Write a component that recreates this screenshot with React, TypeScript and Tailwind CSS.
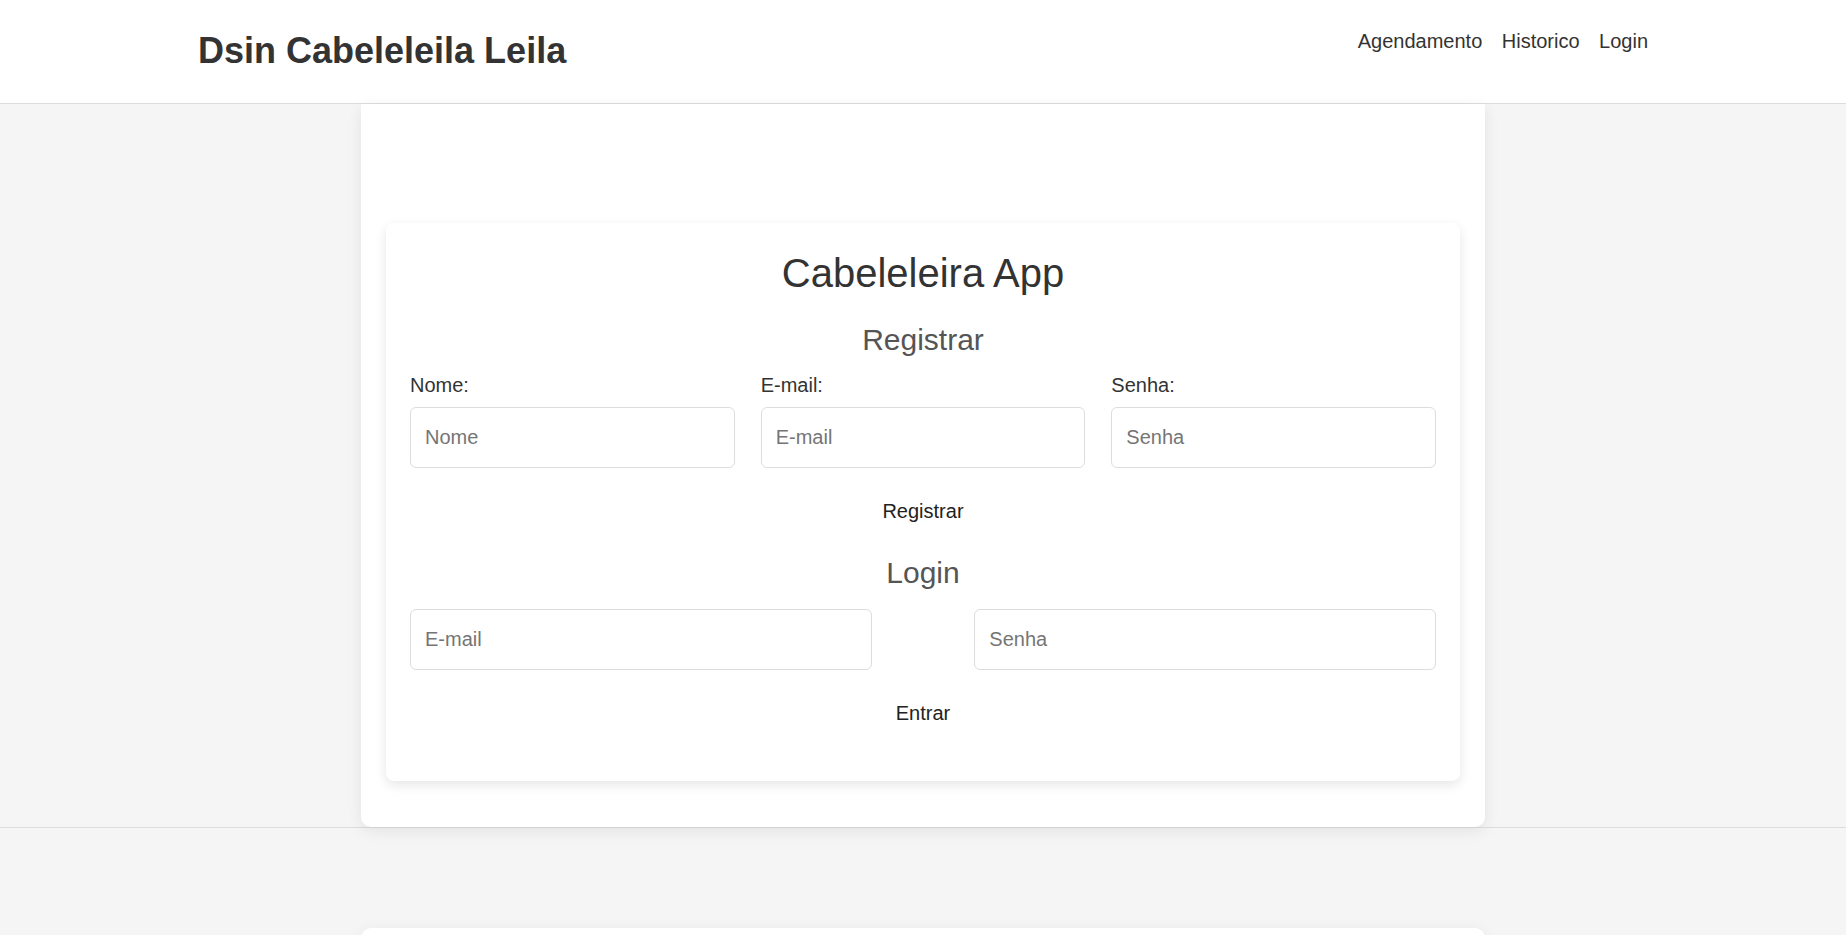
import { useState } from 'react';

const inputClass =
  "block w-full h-[61px] px-[14px] bg-white border border-[#dddddd] rounded-[6px] text-[20px] text-[#333] placeholder:text-[#757575] outline-none";

function Field({ label, placeholder, type = 'text' }: { label: string; placeholder: string; type?: string }) {
  return (
    <div className="flex flex-col">
      <label className="text-[20px] leading-[23px] text-[#333]">{label}</label>
      <input type={type} placeholder={placeholder} className={`${inputClass} mt-[10px]`} />
    </div>
  );
}

export default function App() {
  const [nome, setNome] = useState('');

  return (
    <div className="min-h-screen bg-[#f4f5f4] font-['Liberation_Sans',Arial,sans-serif] text-[#333]">
      <header className="bg-white border-b border-[#dddddd]">
        <div className="w-[1450px] mx-auto h-[103px] pt-[30px] flex items-start justify-between">
          <a href="#" className="text-[36px] leading-[41px] font-bold text-[#333]">
            Dsin Cabeleleila Leila
          </a>
          <nav className="flex gap-[19.5px] text-[20px] leading-[23px] text-[#333]">
            <a href="#">Agendamento</a>
            <a href="#">Historico</a>
            <a href="#">Login</a>
          </nav>
        </div>
      </header>

      <main>
        {/* Login / registro */}
        <section className="border-b border-[#dddddd]">
          <div className="w-[1124px] mx-auto bg-white rounded-b-[10px] shadow-[0_4px_16px_rgba(0,0,0,0.08)] px-[25px] pt-[119px] pb-[46px]">
            <div className="bg-white rounded-[8px] shadow-[0_4px_12px_rgba(0,0,0,0.1)] px-[24px] pt-[27px] pb-[56px]">
              <h1 className="text-center text-[40px] leading-[46px] text-[#333]">Cabeleleira App</h1>

              <h2 className="mt-[27px] text-center text-[30px] leading-[34px] text-[#555]">Registrar</h2>
              <form className="mt-[17px]" onSubmit={(e) => e.preventDefault()}>
                <div className="grid grid-cols-3 gap-x-[26px]">
                  <div className="flex flex-col">
                    <label className="text-[20px] leading-[23px] text-[#333]">Nome:</label>
                    <input
                      value={nome}
                      onChange={(e) => setNome(e.target.value)}
                      placeholder="Nome"
                      className={`${inputClass} mt-[10px]`}
                    />
                  </div>
                  <Field label="E-mail:" placeholder="E-mail" type="email" />
                  <Field label="Senha:" placeholder="Senha" type="password" />
                </div>
                <button type="submit" className="block mx-auto mt-[32px] text-[20px] leading-[23px] text-[#222] bg-transparent">
                  Registrar
                </button>
              </form>

              <h2 className="mt-[33px] text-center text-[30px] leading-[34px] text-[#555]">Login</h2>
              <form className="mt-[19px]" onSubmit={(e) => e.preventDefault()}>
                <div className="flex justify-between">
                  <input type="email" placeholder="E-mail" className={`${inputClass} !w-[45%]`} />
                  <input type="password" placeholder="Senha" className={`${inputClass} !w-[45%]`} />
                </div>
                <button type="submit" className="block mx-auto mt-[32px] text-[20px] leading-[23px] text-[#222] bg-transparent">
                  Entrar
                </button>
              </form>
            </div>
          </div>
        </section>

        {/* Agendamento */}
        <section className="pt-[100px] pb-[60px]">
          <div className="w-[1124px] mx-auto bg-white rounded-[10px] shadow-[0_4px_16px_rgba(0,0,0,0.08)] h-[420px]" />
        </section>
      </main>
    </div>
  );
}
